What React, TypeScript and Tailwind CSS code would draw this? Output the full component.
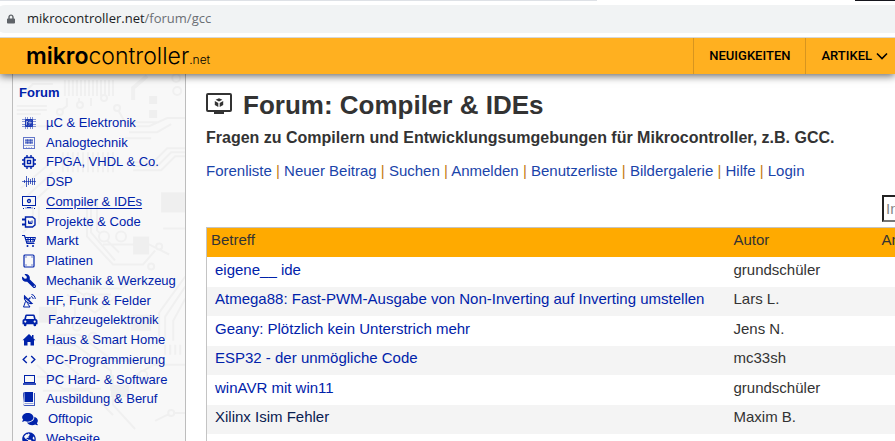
import type { ReactNode } from "react";
import { FaComments, FaGlobeAmericas, FaLock, FaWrench } from "react-icons/fa";

type ForumLink = {
  label: string;
  icon: ReactNode;
  active?: boolean;
};

type Thread = {
  title: string;
  author: string;
  visited?: boolean;
};

const ICON = "w-[14px] h-[14px] shrink-0";
const WIDE_ICON = "w-4 h-[14px] shrink-0";

function MonitorIcon({ className }: { className: string }) {
  return (
    <svg viewBox="0 0 26 21" className={className} fill="currentColor" aria-hidden="true">
      <path fillRule="evenodd" d="M2 0h22a2 2 0 0 1 2 2v15a2 2 0 0 1-2 2h-6v2H8v-2H2a2 2 0 0 1-2-2V2a2 2 0 0 1 2-2zm0 2v15h22V2z" />
      <path d="M13 5.200l3.400 1.600L13 8.600 9.600 6.800zM8.800 8l3.500 1.900v4L8.800 12zM17.200 8v4l-3.500 1.900v-4z" />
    </svg>
  );
}

function SmallMonitorIcon() {
  return (
    <svg viewBox="0 0 14 14" className={ICON} fill="none" stroke="currentColor" aria-hidden="true">
      <rect x=".5" y="1.500" width="13" height="9" />
      <path d="M5 12.500h4M1 13.500h1M12 13.500h1" />
      <circle cx="7" cy="6" r="1.500" strokeWidth="1.300" />
      <path d="M3 13h8" opacity=".5" />
    </svg>
  );
}

function McuIcon() {
  return (
    <svg viewBox="0 0 14 14" className={ICON} fill="currentColor" aria-hidden="true">
      <path d="M3 1h1v12H3zM5 1h1v12H5zM8 1h1v12H8zM10 1h1v12h-1zM0 3h14v1H0zM0 5h14v1H0zM0 8h14v1H0zM0 10h14v1H0z" opacity=".45" />
      <rect x="3" y="3" width="8" height="8" rx="1" opacity=".8" />
      <path d="M4 5h2v1H5v3H4zM9 4L6 7h2L6 10l4-4H8z" fill="#f8f8f8" opacity=".6" />
    </svg>
  );
}

function ScopeIcon() {
  return (
    <svg viewBox="0 0 14 14" className={ICON} fill="none" stroke="currentColor" aria-hidden="true">
      <rect x="1.500" y="1.500" width="11" height="11" opacity=".6" />
      <rect x="3" y="3" width="8" height="5" fill="currentColor" stroke="none" opacity=".4" />
      <path d="M3 4.500h8M3 6.500h8M5.500 3v5M8.500 3v5M2 9.500h10M4 11.500h1M6.500 11.500h1M9 11.500h1" opacity=".35" />
    </svg>
  );
}

function FpgaIcon() {
  return (
    <svg viewBox="0 0 14 14" className={ICON} fill="none" stroke="currentColor" aria-hidden="true">
      <rect x="2.500" y="2.500" width="9" height="9" rx="1" strokeWidth="1.600" />
      <rect x="5.500" y="5.500" width="3" height="3" strokeWidth="1.400" />
      <path d="M5 0v2M9 0v2M5 12v2M9 12v2M0 5h2M0 9h2M12 5h2M12 9h2" strokeWidth="1.400" />
    </svg>
  );
}

function DspIcon() {
  return (
    <svg viewBox="0 0 14 14" className={ICON} stroke="currentColor" aria-hidden="true">
      <path d="M0 6.500h14" opacity=".6" />
      <path d="M2.500 5v3M4.500 1v11M6.500 3v7M8.500 4v5M10.500 3v7M12.500 3v7" opacity=".7" />
    </svg>
  );
}

function ProjectIcon() {
  return (
    <svg viewBox="0 0 14 14" className={ICON} fill="none" stroke="currentColor" aria-hidden="true">
      <path d="M3.500 2h7L13 4v6l-2.500 2h-7z" strokeWidth="1.400" />
      <path d="M0 4.500h4M0 9.500h4" strokeWidth="2" />
      <path d="M6.500 5.500v3h1.500v-2 2h2v-3" />
    </svg>
  );
}

function CartIcon() {
  return (
    <svg viewBox="0 0 14 14" className={ICON} fill="none" stroke="currentColor" aria-hidden="true">
      <path d="M0 1.500h2.500L5 9.500h7.500" strokeWidth="1.200" />
      <path d="M3 3.500h10.500L12 8H4.500M3.500 5.500h9.500M6 3.500V8M8.500 3.500V8M11 3.500V8" />
      <circle cx="5.500" cy="12" r="1" fill="currentColor" stroke="none" />
      <circle cx="11" cy="12" r="1" fill="currentColor" stroke="none" />
    </svg>
  );
}

function BoardIcon() {
  return (
    <svg viewBox="0 0 14 14" className={ICON} aria-hidden="true">
      <rect x="2" y="1" width="10" height="12" rx="1" fill="none" stroke="currentColor" strokeWidth="1.200" />
      <path d="M3.500 2.500h1v1h-1zM9.500 2.500h1v1h-1zM3.500 10.500h1v1h-1zM9.500 10.500h1v1h-1z" fill="currentColor" />
    </svg>
  );
}

function DishIcon() {
  return (
    <svg viewBox="0 0 14 14" className={ICON} fill="none" stroke="currentColor" aria-hidden="true">
      <path d="M2.500 2c-1 4 2.500 8 7.500 7.500zM6.500 5.500l2-2" strokeWidth="1.200" />
      <path d="M3 4l5 4M3.500 7.500L1.500 13H8L5.500 9.500" />
      <path d="M9 2.500c1.300.2 2 1 2.200 2.500M9.500.5c2.300.3 3.500 1.800 3.800 4.500" />
    </svg>
  );
}

function CarIcon() {
  return (
    <svg viewBox="0 0 16 14" className={WIDE_ICON} fill="currentColor" aria-hidden="true">
      <path fillRule="evenodd" d="M4.600 1.500h6.800c.8 0 1.300.4 1.500 1.200L13.700 6c1.100.1 1.800.9 1.800 1.900v3.300h-1.300v.8a1.300 1.300 0 0 1-2.700 0v-.8h-7v.8a1.300 1.300 0 0 1-2.700 0v-.8H.5V7.900C.5 6.900 1.200 6.100 2.300 6l.8-3.300c.2-.8.7-1.200 1.500-1.200zM4.700 3L4 6h8l-.7-3zM3.300 7.500a1.100 1.100 0 1 0 0 2.200 1.100 1.100 0 0 0 0-2.200zm9.400 0a1.100 1.100 0 1 0 0 2.200 1.100 1.100 0 0 0 0-2.200z" />
    </svg>
  );
}

function HouseIcon() {
  return (
    <svg viewBox="0 0 14 14" className={ICON} fill="currentColor" aria-hidden="true">
      <path d="M7 1l6.500 6.200H12V12.500H8.500V9h-3v3.500H2V7.200H.5z" />
      <path d="M10 2h1.500v3H10z" />
    </svg>
  );
}

function CodeIcon() {
  return (
    <svg viewBox="0 0 14 14" className={ICON} fill="none" stroke="currentColor" strokeWidth="1.400" aria-hidden="true">
      <path d="M4.800 3L1.200 6.500 4.800 10M9.200 3l3.600 3.500L9.200 10" />
    </svg>
  );
}

function LaptopIcon() {
  return (
    <svg viewBox="0 0 14 14" className={ICON} fill="none" stroke="currentColor" aria-hidden="true">
      <rect x="2.500" y="2.500" width="10" height="7" />
      <path d="M1 11h13" strokeWidth="1.600" />
    </svg>
  );
}

function BookIcon() {
  return (
    <svg viewBox="0 0 14 14" className={ICON} fill="currentColor" aria-hidden="true">
      <path d="M2.500 0H11v10H2.500z" />
      <path d="M2.500 0A1.500 1.500 0 0 0 1 1.500v9.800A1.700 1.700 0 0 0 2.700 13H12V1h1v13H2.700A2.500 2.500 0 0 1 1 12z" opacity=".75" />
      <path d="M2.500 11h9v.8h-9z" opacity=".5" />
    </svg>
  );
}

const forums: ForumLink[] = [
  { label: "µC & Elektronik", icon: <McuIcon /> },
  { label: "Analogtechnik", icon: <ScopeIcon /> },
  { label: "FPGA, VHDL & Co.", icon: <FpgaIcon /> },
  { label: "DSP", icon: <DspIcon /> },
  { label: "Compiler & IDEs", icon: <SmallMonitorIcon />, active: true },
  { label: "Projekte & Code", icon: <ProjectIcon /> },
  { label: "Markt", icon: <CartIcon /> },
  { label: "Platinen", icon: <BoardIcon /> },
  { label: "Mechanik & Werkzeug", icon: <FaWrench className="w-[14px] h-[14px] shrink-0 -scale-x-100" /> },
  { label: "HF, Funk & Felder", icon: <DishIcon /> },
  { label: "Fahrzeugelektronik", icon: <CarIcon /> },
  { label: "Haus & Smart Home", icon: <HouseIcon /> },
  { label: "PC-Programmierung", icon: <CodeIcon /> },
  { label: "PC Hard- & Software", icon: <LaptopIcon /> },
  { label: "Ausbildung & Beruf", icon: <BookIcon /> },
  { label: "Offtopic", icon: <FaComments className={WIDE_ICON} /> },
  { label: "Webseite", icon: <FaGlobeAmericas className={ICON} /> },
];

const actions = ["Forenliste", "Neuer Beitrag", "Suchen", "Anmelden", "Benutzerliste", "Bildergalerie", "Hilfe", "Login"];

const threads: Thread[] = [
  { title: "eigene__ ide", author: "grundschüler" },
  { title: "Atmega88: Fast-PWM-Ausgabe von Non-Inverting auf Inverting umstellen", author: "Lars L." },
  { title: "Geany: Plötzlich kein Unterstrich mehr", author: "Jens N." },
  { title: "ESP32 - der unmögliche Code", author: "mc33sh" },
  { title: "winAVR mit win11", author: "grundschüler" },
  { title: "Xilinx Isim Fehler", author: "Maxim B.", visited: true },
];

function AddressBar() {
  return (
    <div className="relative z-20 bg-white border-b border-[#d5d7da]">
      <div className="flex justify-between h-px">
        <div className="w-2/3 bg-[#dee1e6]" />
        <div className="w-10 bg-[#15151c]" />
      </div>
      <div className="py-1">
        <div className="flex items-center gap-3 h-7 -ml-2 pl-[15px] rounded-l-full bg-[#f1f3f4] font-['Open_Sans',sans-serif] text-[13px]">
          <FaLock className="w-2 h-3 text-[#5f6368]" />
          <p className="text-[#202124]">
            mikrocontroller.net<span className="text-[#6b6f74]">/forum/gcc</span>
          </p>
        </div>
      </div>
    </div>
  );
}

function SiteHeader() {
  return (
    <header className="relative z-10 flex justify-between h-9 bg-[#ffb020] text-black shadow-[0_2px_8px_rgba(0,0,0,0.6)]">
      <a href="#" className="flex items-baseline pl-[26px] font-['Inter',sans-serif] text-[23px] leading-9">
        <span className="font-semibold">mikro</span>
        <span className="font-light">controller</span>
        <span className="text-xs font-light">.net</span>
      </a>
      <nav className="flex font-['Roboto',sans-serif] text-[13px] font-medium">
        <a href="#" className="flex items-center px-[15px] border-l border-[#d7951f]">NEUIGKEITEN</a>
        <a href="#" className="flex items-center gap-1 pl-[15px] pr-[7px] border-l border-[#d7951f]">
          ARTIKEL
          <svg viewBox="0 0 12 8" className="w-3 h-2" fill="none" stroke="currentColor" strokeWidth="1.600" aria-hidden="true">
            <path d="M1 1.500l5 5 5-5" />
          </svg>
        </a>
      </nav>
    </header>
  );
}

function CircuitPattern() {
  return (
    <svg className="absolute inset-0 w-full h-full" viewBox="0 0 172 366" preserveAspectRatio="xMidYMin slice" fill="none" stroke="#f0f0f0" strokeWidth="2" aria-hidden="true">
      <path d="M52 6v16M56 6v16M60 6v16M64 6v16M68 6v16M72 6v16M76 6v16M80 6v16M84 6v16M88 6v16M92 6v16M96 6v16M100 6v16" />
      <path d="M8 22l12-12h20M4 32h30M4 36h30M4 40h24M10 52h28M54 24v8l-8 6M66 24v6M78 24v8" />
      <path d="M120 26V14l14-12" strokeWidth="4" />
      <path d="M104 34l8 14h34M112 52h24l18-8h18M116 58h28l14-8M112 64h26M120 88h20l14-14h18M120 92h24l14-14h14M120 96h28l14-14h10" />
      <path d="M50 78v20M55 78v20M60 78v20M65 78v20M70 78v20M75 78v20M80 78v20M85 78v20M90 78v20M95 78v20M100 78v20" />
      <path d="M8 114l28-24M14 122l26-24M20 128l26-24M20 128v20l-10 10M26 132v18M74 124v38l26 28h30l12-14M78 124v34l24 28M84 124v32l22 22M150 154h22M90 170h46l20 10" />
      <path d="M50 208l20 12h28M50 214h58l16-12M54 220l28 18 24-18M62 226v20M172 202l-26 36v24M172 212l-20 30v22M172 224l-12 22v20" />
      <path d="M40 260h26l34 26h24M36 270h26l36 26v20M44 282l22 18M24 290l26 24h38M24 302h34M30 316h46l24 24M120 302l20-12h32M100 300v30l22 24M142 346l16-8h14" />
      <path d="M152 270v10M157 270v10M162 270v10M167 270v10" />
      <g fill="#f8f8f8">
        <circle cx="67" cy="31" r="3" />
        <circle cx="91" cy="24" r="3" />
        <circle cx="104" cy="34" r="3" />
        <circle cx="163" cy="4" r="4" />
        <circle cx="164" cy="17" r="4" />
        <circle cx="47" cy="38" r="3" />
        <circle cx="91" cy="162" r="5" />
        <circle cx="108" cy="162" r="5" />
        <circle cx="146" cy="172" r="3" />
        <circle cx="138" cy="192" r="3" />
        <circle cx="74" cy="222" r="3" />
        <circle cx="64" cy="252" r="4" />
        <circle cx="80" cy="262" r="4" />
        <circle cx="130" cy="300" r="4" />
        <circle cx="64" cy="322" r="3" />
        <circle cx="158" cy="338" r="3" />
      </g>
      <path d="M136 22h8v8h-8zM136 36h8v8h-8zM120 162h16v18h-16zM148 118h24v20h-24zM26 232h18v16H26zM118 240h20v16h-20zM98 310h18v12H98z" fill="#efefef" stroke="none" />
    </svg>
  );
}

function Sidebar() {
  return (
    <aside className="pl-3 bg-[#f7f7f7] shrink-0">
      <div className="relative w-[174px] h-full pt-[9px] border-x border-[#bdbdbd] bg-[#f8f8f8]">
        <CircuitPattern />
        <nav className="relative text-[#0022aa] text-[13px]">
          <h2 className="pl-1.5 font-bold leading-5">Forum</h2>
          <ul className="pt-2.5 pl-[9px]">
            {forums.map((forum) => (
              <li key={forum.label} className="h-5 nth-[4n+2]:h-[19px]">
                <a href="#" className="flex items-center gap-2.5 leading-5 whitespace-nowrap">
                  {forum.icon}
                  <span className={forum.active ? "underline underline-offset-2" : undefined}>{forum.label}</span>
                </a>
              </li>
            ))}
          </ul>
        </nav>
      </div>
    </aside>
  );
}

function ThreadTable() {
  return (
    <table className="w-full mt-[5px] border border-[#c4c4c4] text-[#333333] text-left">
      <thead>
        <tr className="h-[29px] bg-[#ffaa00]">
          <th className="w-[523px] pl-1 pb-1 font-normal">Betreff</th>
          <th className="w-[148px] pl-1 pb-1 font-normal">Autor</th>
          <th className="pl-1 pb-1 font-normal">Antworten</th>
        </tr>
      </thead>
      <tbody>
        {threads.map((thread) => (
          <tr key={thread.title} className="h-[29px] odd:h-[30px] first:h-[29px] even:bg-[#f4f4f4]">
            <td className="pl-2 pb-1 whitespace-nowrap">
              <a href="#" className={thread.visited ? "text-[#0a2050]" : "text-[#0022aa]"}>{thread.title}</a>
            </td>
            <td className="pl-1 pb-1">{thread.author}</td>
            <td />
          </tr>
        ))}
        <tr className="h-[30px]">
          <td colSpan={3} />
        </tr>
      </tbody>
    </table>
  );
}

export default function App() {
  return (
    <div className="flex flex-col h-screen overflow-hidden bg-white font-['Liberation_Sans',Arial,sans-serif]">
      <AddressBar />
      <SiteHeader />
      <div className="flex flex-1 min-h-0">
        <Sidebar />
        <main className="flex-1 min-w-0 overflow-hidden pl-5 pt-[15px] text-[15px] leading-5">
          <div className="min-w-[860px]">
            <h1 className="flex items-center gap-[11px] text-[26px] leading-8 font-bold text-[#333333]">
              <MonitorIcon className="w-[26px] h-[21px] mb-1" />
              Forum: Compiler &amp; IDEs
            </h1>
            <p className="pt-[7px] text-base leading-5 font-bold text-[#333333]">
              Fragen zu Compilern und Entwicklungsumgebungen für Mikrocontroller, z.B. GCC.
            </p>
            <p className="pt-[13px] text-[#c47a12]">
              {actions.map((action, i) => (
                <span key={action}>
                  {i > 0 && " | "}
                  <a href="#" className="text-[#1a44aa]">{action}</a>
                </span>
              ))}
            </p>
            <div className="flex justify-end pt-3.5">
              <input
                type="search"
                aria-label="Suche"
                placeholder="In diesem Forum suchen"
                className="w-[184px] h-[27px] px-0.5 border-2 border-t-[#222222] border-l-[#222222] border-b-[#767676] border-r-[#767676] placeholder:text-[#858585]"
              />
            </div>
            <ThreadTable />
          </div>
        </main>
      </div>
    </div>
  );
}
